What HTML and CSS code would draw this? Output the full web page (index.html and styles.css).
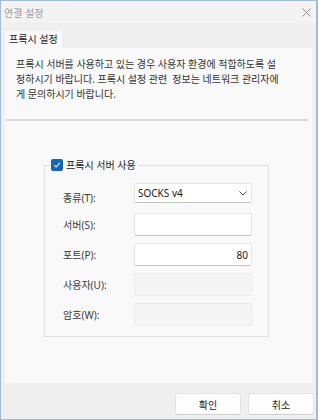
FILE: index.html
```html
<!DOCTYPE html>
<html lang="ko">
<head>
  <meta charset="UTF-8">
  <title>연결 설정</title>
  <link rel="stylesheet" href="styles.css">
</head>
<body>
  <div class="window">
    <div class="titlebar">
      <span class="title">연결 설정</span>
      <svg class="close" width="9" height="9" viewBox="0 0 9 9">
        <path d="M0.5 0.5 L8.5 8.5 M8.5 0.5 L0.5 8.5" stroke="#8c8c8c" stroke-width="1" fill="none"/>
      </svg>
    </div>

    <div class="tabs">
      <div class="tab active">프록시 설정</div>
    </div>

    <div class="panel">
      <p class="info">프록시 서버를 사용하고 있는 경우 사용자 환경에 적합하도록 설<br>정하시기 바랍니다. 프록시 설정 관련&nbsp; 정보는 네트워크 관리자에<br>게 문의하시기 바랍니다.</p>

      <div class="separator"></div>

      <fieldset class="group">
        <legend class="group-title">
          <span class="checkbox">
            <svg width="8" height="8" viewBox="0 0 8 8">
              <path d="M1.2 4.2 L3.1 6 L6.8 1.8" stroke="#fff" stroke-width="1.1" fill="none"/>
            </svg>
          </span>
          프록시 서버 사용
        </legend>

        <div class="row">
          <label class="low">종류(T):</label>
          <div class="field select">
            <span>SOCKS v4</span>
            <svg width="8" height="5" viewBox="0 0 8 5">
              <path d="M0.5 0.5 L4 4 L7.5 0.5" stroke="#555" stroke-width="1" fill="none"/>
            </svg>
          </div>
        </div>
        <div class="row">
          <label>서버(S):</label>
          <div class="field"></div>
        </div>
        <div class="row">
          <label>포트(P):</label>
          <div class="field number">80</div>
        </div>
        <div class="row">
          <label>사용자(U):</label>
          <div class="field disabled"></div>
        </div>
        <div class="row">
          <label>암호(W):</label>
          <div class="field disabled"></div>
        </div>
      </fieldset>
    </div>

    <div class="buttons">
      <button>확인</button>
      <button>취소</button>
    </div>
  </div>
</body>
</html>
```

FILE: styles.css
```css
body {
  margin: 0;
  font-family: "Noto Sans", "Noto Sans CJK KR", sans-serif;
  font-size: 10px;
  color: #333;
}

.window {
  width: 318px;
  height: 420px;
  box-sizing: border-box;
  border: 1px solid #a2bcd6;
  border-right-width: 2px;
  background-color: #efefef;
  display: flex;
  flex-direction: column;
}

.titlebar {
  height: 22px;
  background-color: #f3f3f3;
  display: flex;
  align-items: center;
  justify-content: space-between;
  padding: 0 5px 0 3px;
}

.title {
  color: #9d9d9d;
  font-size: 10px;
}

.tabs {
  display: flex;
  padding: 8px 4px 0 4px;
}

.tab {
  height: 17px;
  line-height: 17px;
  padding: 0 4px;
  color: #222;
}

.tab.active {
  background-color: #f9f9f9;
}

.panel {
  margin: 0 3px 0 4px;
  height: 335px;
  background-color: #f9f9f9;
  box-sizing: border-box;
  border-right: 1px solid #f2f2f2;
  padding-top: 9px;
}

.info {
  margin: 0;
  padding-left: 11px;
  line-height: 15px;
  white-space: nowrap;
}

.separator {
  height: 2px;
  background-color: #dadada;
  margin: 17px 4px 0 1px;
}

.group {
  margin: 37px 0 0 39px;
  width: 225px;
  box-sizing: border-box;
  border: 1px solid #e0e0e0;
  padding: 11px 0 10px 0;
  display: flex;
  flex-direction: column;
  gap: 7px;
}

.group-title {
  display: flex;
  align-items: center;
  gap: 3px;
  margin-left: 5px;
  padding: 0 2px 0 1px;
  line-height: 14px;
  color: #222;
}

.checkbox {
  width: 12px;
  height: 12px;
  border-radius: 2px;
  background-color: #0f66c0;
  display: flex;
  align-items: center;
  justify-content: center;
}

.row {
  display: flex;
  align-items: center;
  padding-left: 18px;
}

.row label {
  width: 71px;
  color: #3a3a3a;
}

.row label.low {
  padding-top: 5px;
}

.field {
  width: 118px;
  height: 23px;
  box-sizing: border-box;
  background-color: #fff;
  border: 1px solid #e6e6e6;
  border-bottom-color: #c4c4c4;
  border-radius: 2px;
  padding: 0 3px;
  display: flex;
  align-items: center;
  color: #1a1a1a;
}

.field.select {
  justify-content: space-between;
  padding: 0 4px 0 3px;
  height: 20px;
  margin-bottom: 3px;
}

.field.number {
  justify-content: flex-end;
}

.field.disabled {
  background-color: #f5f5f5;
  border-color: #ececec;
}

.buttons {
  flex: 1;
  display: flex;
  justify-content: flex-end;
  align-items: flex-start;
  gap: 7px;
  padding: 10px 2px 0 0;
}

.buttons button {
  width: 66px;
  height: 22px;
  font-family: inherit;
  font-size: 10px;
  color: #1a1a1a;
  background-color: #fdfdfd;
  border: 1px solid #e2e2e2;
  border-bottom-color: #cfcfcf;
  border-radius: 3px;
  padding: 0;
}
```
